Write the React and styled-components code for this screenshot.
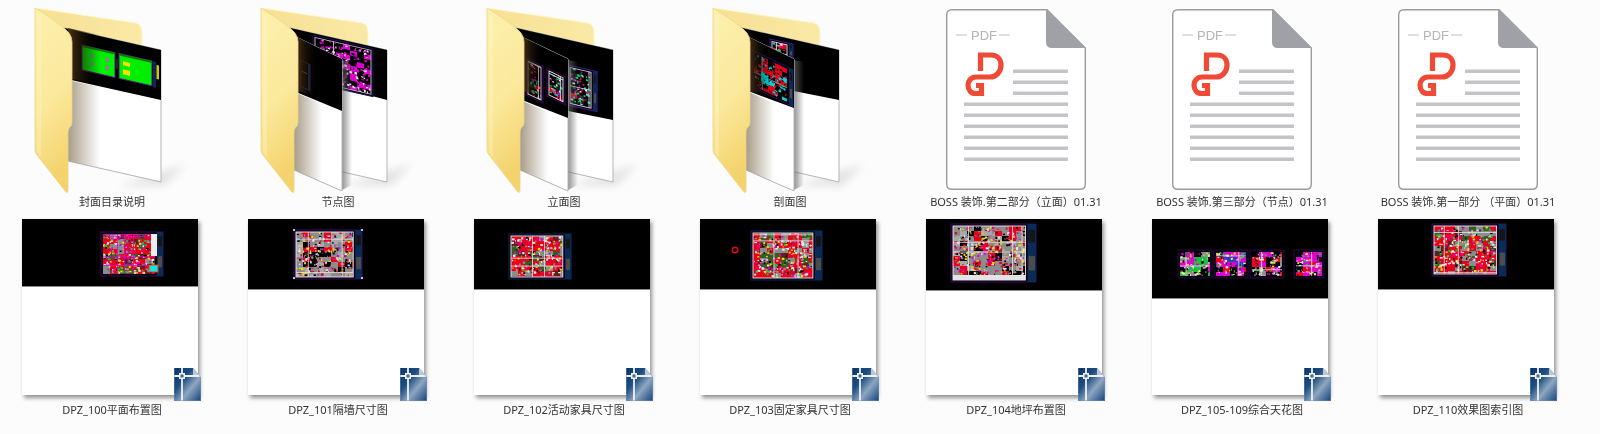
import React from 'react'
import styled, { createGlobalStyle } from 'styled-components'

const GlobalStyle = createGlobalStyle`
  html, body {
    margin: 0;
    background: #fcfcfc;
  }
`

const Page = styled.div`
  width: 1600px;
  height: 434px;
  overflow: hidden;
  box-sizing: border-box;
  padding-left: 2px;
  display: grid;
  grid-template-columns: repeat(7, 216px);
  grid-auto-rows: min-content;
  column-gap: 10px;
  row-gap: 10px;
  font-family: 'Noto Sans', 'Noto Sans CJK SC', sans-serif;
  filter: blur(0.35px);
`

const Cell = styled.div`
  display: flex;
  flex-direction: column;
  align-items: center;
`

const IconSlot = styled.div`
  width: 216px;
  height: 195px;
  line-height: 0;
`

const Label = styled.div`
  font-size: 11px;
  line-height: 14px;
  height: 14px;
  margin-left: 4px;
  color: #333;
  white-space: pre;
  text-align: center;
`

const Thumb = styled.div`
  position: relative;
  width: 176px;
  height: 176px;
  margin-bottom: 8px;
  background: #fff;
  display: flex;
  flex-direction: column;
  box-shadow: 2px 3px 4px rgba(0, 0, 0, 0.42);
`

const ThumbBlack = styled.div`
  height: ${(props) => props.$height}px;
  background: #000;
  border-bottom: 1px solid #8c8c8c;
  line-height: 0;
`

const CadBadge = styled.svg`
  position: absolute;
  right: -3px;
  bottom: -6px;
`

// small seeded random, so the plan drawings stay the same on every render
const seeded = (seed) => {
  let s = seed
  return () => {
    s = (s * 16807) % 2147483647
    return (s - 1) / 2147483646
  }
}

const RED = '#e8001c'
const GRAY = '#8c8c8c'
const MAG = '#e000d0'
const PLAN = [RED, RED, RED, RED, RED, GRAY, GRAY, '#5c2020', '#3c5a20']
const ACCENTS = ['#e8e8e8', '#e8e8e8', MAG, '#f0e000', '#18c040', GRAY, '#000']

const CadPlan = ({ x, y, w, h, seed, colors = PLAN, accents = ACCENTS, lines = 5, lineColor = '#e4e4e4', frame = '#3d0a5a', outline = '#e6e6e6', title = true }) => {
  const rand = seeded(seed)
  const pick = (list) => list[Math.floor(rand() * list.length)]
  const titleW = title ? Math.max(4, w * 0.1) : 0
  const px = x + 2
  const py = y + 2
  const pw = w - 4 - titleW
  const ph = h - 4
  const parts = []
  const cw = 7
  const ch = 5
  for (let i = 0; i * cw < pw; i++) {
    for (let j = 0; j * ch < ph; j++) {
      parts.push(
        <rect key={`b${i}-${j}`} x={px + i * cw} y={py + j * ch} width={Math.min(cw, pw - i * cw)} height={Math.min(ch, ph - j * ch)} fill={pick(colors)} />
      )
    }
  }
  const dots = Math.floor((pw * ph) / 9)
  for (let i = 0; i < dots; i++) {
    const dw = 0.8 + rand() * 2
    const dh = 0.8 + rand() * 1.6
    parts.push(
      <rect key={`d${i}`} x={px + rand() * (pw - dw)} y={py + rand() * (ph - dh)} width={dw} height={dh} fill={pick(accents)} />
    )
  }
  for (let i = 0; i < lines; i++) {
    const a = rand()
    parts.push(
      i % 2 === 0 ? (
        <rect key={`l${i}`} x={px + a * pw} y={py} width="0.8" height={ph} fill={lineColor} />
      ) : (
        <rect key={`l${i}`} x={px} y={py + a * ph} width={pw} height="0.8" fill={lineColor} />
      )
    )
  }
  return (
    <g>
      <rect x={x} y={y} width={w} height={h} fill="#05000f" stroke={frame} strokeWidth="1" />
      {parts}
      {outline && <rect x={px} y={py} width={pw} height={ph} fill="none" stroke={outline} strokeWidth="0.9" />}
      {title && (
        <g>
          <rect x={x + w - titleW} y={y} width={titleW} height={h} fill="#0a2a58" />
          <rect x={x + w - titleW + 1} y={y + h * 0.1} width={titleW - 2} height={h * 0.22} fill="#161616" />
          <rect x={x + w - titleW + 1} y={y + h * 0.55} width={titleW - 2} height={h * 0.25} fill="#4c4c4c" />
        </g>
      )}
    </g>
  )
}

const skew = (x, y, slope = 0.228) => `matrix(1 ${slope} 0 1 ${x} ${y})`
const FRONT_SLOPE = 0.48

const CoverDrawing = () => (
  <g transform={skew(82, 45)}>
    <rect x="0" y="0" width="33" height="25" fill="#00ee00" stroke="#5a1080" strokeWidth="1" />
    <rect x="37" y="0" width="33" height="25" fill="#00ee00" stroke="#5a1080" strokeWidth="1" />
    <rect x="0" y="0" width="33" height="2" fill="#0c7a0c" />
    <rect x="37" y="0" width="33" height="2" fill="#0c7a0c" />
    <g fill="#d050d0">
      <rect x="9" y="7" width="2" height="4" />
      <rect x="9" y="15" width="2" height="4" />
      <rect x="24" y="7" width="2.500" height="4" />
      <rect x="24" y="15" width="2.500" height="4" />
    </g>
    <g fill="#f6e000">
      <rect x="41" y="7" width="7" height="4" />
      <rect x="41" y="15" width="7" height="5" />
    </g>
    <rect x="33.500" y="6" width="3" height="10" fill="#222" />
    <rect x="71" y="0" width="3" height="26" fill="#0a2a58" />
    <rect x="74.500" y="3" width="2.500" height="14" fill="#d8c800" />
  </g>
)

const MAGENTA = ['#000', '#000', '#000', MAG, MAG, '#000']
const MAG_DOTS = [MAG, MAG, '#000', '#f4f4f4']
const COLORFUL = ['#000', '#000', '#000', RED, '#202020']
const COLOR_DOTS = ['#e8e8e8', MAG, '#18d090', '#18d090', RED, '#000']
const CYANRED = ['#000', '#000', RED, RED, '#00d8d8']
const CYAN_DOTS = [RED, RED, '#00e0e0', '#00e0e0', '#000', '#000']

const FOLDERS = [
  {
    label: '封面目录说明',
    back: { black: [90, 100] },
    drawBack: <CoverDrawing />,
  },
  {
    label: '节点图',
    back: { black: [88, 100] },
    front: { black: [92, 111] },
    drawBack: (
      <g transform={skew(87, 35)}>
        <CadPlan x={0} y={0} w={60} h={48} seed={31} colors={MAGENTA} accents={MAG_DOTS} lines={1} title={false} outline="#c8c8c8" frame="#2a0a60" />
      </g>
    ),
    drawFront: (
      <g transform={skew(74, 60, FRONT_SLOPE)}>
        <rect x="0" y="0" width="10" height="26" fill="none" stroke="#4a1a6a" strokeWidth="1" />
        <rect x="8" y="0" width="2" height="26" fill="#16305a" />
        <rect x="1" y="10" width="6" height="0.800" fill="#777" />
      </g>
    ),
  },
  {
    label: '立面图',
    back: { black: [111, 120] },
    front: { black: [100, 118] },
    drawBack: (
      <g transform={skew(116, 65)}>
        <CadPlan x={0} y={0} w={29} h={40} seed={53} colors={COLORFUL} accents={COLOR_DOTS} lines={2} frame="#4a1a9a" />
      </g>
    ),
    drawFront: (
      <g transform={skew(74, 58, FRONT_SLOPE)}>
        <CadPlan x={0} y={0} w={17} h={37} seed={11} colors={COLORFUL} accents={COLOR_DOTS} lines={2} title={false} />
        <CadPlan x={21} y={0} w={18} h={28} seed={19} colors={COLORFUL} accents={COLOR_DOTS} lines={2} title={false} />
      </g>
    ),
  },
  {
    label: '剖面图',
    back: { black: [91, 100] },
    front: { black: [91, 108] },
    drawBack: (
      <g transform={skew(92, 39)}>
        <CadPlan x={0} y={0} w={23} h={14} seed={71} colors={COLORFUL} accents={COLOR_DOTS} lines={1} frame="#4a1a9a" />
      </g>
    ),
    drawFront: (
      <g transform={skew(74, 50, FRONT_SLOPE)}>
        <CadPlan x={0} y={0} w={41} h={37} seed={23} colors={CYANRED} accents={CYAN_DOTS} lines={2} lineColor="#00e0e0" outline={null} frame="#2a0a60" />
      </g>
    ),
  },
]

const Folder = ({ id, back, front, drawBack, drawFront }) => {
  // black[0] is the height of the black band at x 116, black[1] at the right edge
  const backLeft = back.black[0] - ((back.black[1] - back.black[0]) / 45) * 56
  return (
    <svg width="216" height="195" viewBox="2 0 216 195">
      <defs>
        <linearGradient id={`flap${id}`} x1="0" y1="0" x2="0.2" y2="1">
          <stop offset="0" stopColor="#fdf0ae" />
          <stop offset="0.55" stopColor="#fbe99c" />
          <stop offset="1" stopColor="#f4d26c" />
        </linearGradient>
        <linearGradient id={`backf${id}`} x1="0" y1="0" x2="1" y2="0">
          <stop offset="0" stopColor="#f6e092" />
          <stop offset="1" stopColor="#fae9a6" />
        </linearGradient>
        <linearGradient id={`shade${id}`} x1="0" y1="0" x2="1" y2="0">
          <stop offset="0" stopColor="#a89c88" />
          <stop offset="1" stopColor="#a89c88" stopOpacity="0" />
        </linearGradient>
        <linearGradient id={`drop${id}`} x1="0" y1="0" x2="1" y2="0">
          <stop offset="0" stopColor="#666" />
          <stop offset="1" stopColor="#666" stopOpacity="0" />
        </linearGradient>
        <linearGradient id={`glow${id}`} x1="0" y1="0" x2="1" y2="0">
          <stop offset="0" stopColor="#4a3314" />
          <stop offset="1" stopColor="#000" stopOpacity="0" />
        </linearGradient>
        <filter id={`blur${id}`} x="-40%" y="-40%" width="180%" height="180%">
          <feGaussianBlur stdDeviation="4" />
        </filter>
      </defs>

      <path d="M35 8 L136 23 Q142 25 142 32 V50 L55 30 Z" fill={`url(#backf${id})`} stroke="#fff6c8" strokeWidth="1" />
      <polygon points="161,172 186,164 164,186 118,186" fill="#000" opacity="0.1" filter={`url(#blur${id})`} />

      <polygon points="60,27 161,50 161,182 68,161" fill="#fff" stroke="#b4b4b4" strokeWidth="1" />
      <polygon points={`60,27 161,50 161,${back.black[1]} 60,${backLeft}`} fill="#000" />
      {drawBack}
      {!front && <polygon points="68,78 100,85 100,35 68,28" fill={`url(#glow${id})`} />}
      {!front && <polygon points="68,80 100,87 100,168 68,161" fill={`url(#shade${id})`} />}

      {front && (
        <g>
          <polygon points="116,60 126,62 126,185 116,190" fill={`url(#drop${id})`} opacity="0.7" />
          <polygon points="70,37 116,59 116,191 68,170" fill="#fff" stroke="#b4b4b4" strokeWidth="1" />
          <polygon points={`70,37 116,59 116,${front.black[1]} 70,${front.black[0]}`} fill="#000" />
          {drawFront}
          <polygon points="70,37 92,47 92,96 70,91" fill={`url(#glow${id})`} />
          <polygon points={`68,${front.black[0]} 96,${front.black[0] + 12} 96,182 68,170`} fill={`url(#shade${id})`} />
        </g>
      )}

      <path
        d="M35 8 C50 17 64 27 69 33 Q72 37 72 42 V122 Q72 126 69.500 127.500 Q68 129 68 133 V190 Q68 194 65.500 191.500 L37 155 Q35 153 35 150 Z"
        fill={`url(#flap${id})`}
        stroke="#ecd488"
        strokeWidth="0.8"
      />
      <path d="M38 15 V153 M40 17 V156" stroke="#fff7cc" strokeWidth="0.8" fill="none" opacity="0.8" />
    </svg>
  )
}

const PdfFile = () => (
  <svg width="216" height="195" viewBox="-40 -9 216 195">
    <path
      d="M6 0.700 H101 L139.300 39 V175 Q139.300 180.300 134 180.300 H6 Q0.700 180.300 0.700 175 V6 Q0.700 0.700 6 0.700 Z"
      fill="#fff"
      stroke="#9b9ba0"
      strokeWidth="1.4"
    />
    <path d="M100 0 L139.800 39 H106 Q100 39 100 33 Z" fill="#a0a1a6" />
    <path d="M10 26 H21 M53 26 H64" stroke="#bdbdbd" strokeWidth="1" />
    <text x="25" y="30.700" fontFamily="'Liberation Sans', sans-serif" fontSize="13" fill="#b5b5b5">
      PDF
    </text>
    <path
      d="M32 46 H45 C52 46 55 51 55 56 C55 63 50 68 44 68 H30 C25 68 22 72 22 76 C22 81 25 84.500 30 84.500 H35.500 V76.500 H30"
      fill="none"
      stroke="#f04a36"
      strokeWidth="5.200"
    />
    <path d="M34.500 46 V62" fill="none" stroke="#f04a36" strokeWidth="5.200" />
    <g fill="#c4c4c8">
      {[60.500, 71.500, 82.500].map((y) => (
        <rect key={y} x="67" y={y} width="55" height="3.500" />
      ))}
      {[93.500, 104.500, 115.500, 126.500, 137.500, 148.500].map((y) => (
        <rect key={y} x="18" y={y} width="104" height="3.500" />
      ))}
    </g>
  </svg>
)

const PDFS = ['BOSS 装饰.第二部分（立面）01.31', 'BOSS 装饰.第三部分（节点）01.31', 'BOSS 装饰.第一部分 （平面）01.31']

const Badge = ({ id }) => (
  <CadBadge width="27" height="33" viewBox="0 0 27 33">
    <defs>
      <linearGradient id={`badge${id}`} x1="0" y1="0" x2="1" y2="1">
        <stop offset="0" stopColor="#0c3568" />
        <stop offset="0.35" stopColor="#1e4d80" />
        <stop offset="0.62" stopColor="#8ea6c0" />
        <stop offset="1" stopColor="#12427a" />
      </linearGradient>
    </defs>
    <path d="M0 0 H19 L27 9 V33 H0 Z" fill={`url(#badge${id})`} />
    <path d="M19 0 L27 9 H19 Z" fill="#b9c8d8" />
    <path d="M0 8 H25 M8 0 V33" stroke="#eef2f6" strokeWidth="1.800" />
    <rect x="5" y="5" width="6" height="6" fill="#eef2f6" />
    <rect x="6.500" y="6.500" width="3" height="3" fill="#43688f" />
    <path d="M0.300 0 V32.700 H26.700 V9" fill="none" stroke="#6f93b8" strokeWidth="0.6" />
  </CadBadge>
)

const CornerDots = () => (
  <g fill="#f0f0f0">
    <circle cx="46" cy="11" r="1.100" />
    <circle cx="114" cy="11" r="1.100" />
    <circle cx="46" cy="59" r="1.100" />
    <circle cx="114" cy="59" r="1.100" />
  </g>
)

const GRAYPLAN = [GRAY, GRAY, GRAY, GRAY, '#a8a8a8', RED, '#000']
const GRAY_DOTS = ['#e8e8e8', GRAY, '#000', RED, MAG, '#f0e000']

const THUMBS = [
  {
    label: 'DPZ_100平面布置图',
    black: 67,
    plan: { x: 79, y: 13, w: 62, h: 44, seed: 101, lines: 8, lineColor: MAG, outline: null },
    accent: (
      <g>
        <rect x="129" y="15" width="6" height="22" fill="#eee" />
        <rect x="127" y="46" width="9" height="7" fill="#00e8e8" stroke="#e84010" />
      </g>
    ),
  },
  {
    label: 'DPZ_101隔墙尺寸图',
    black: 70,
    plan: { x: 46, y: 11, w: 68, h: 49, seed: 202, colors: GRAYPLAN, accents: GRAY_DOTS, lines: 4 },
    accent: <CornerDots />,
  },
  { label: 'DPZ_102活动家具尺寸图', black: 70, plan: { x: 35, y: 15, w: 62, h: 45, seed: 303, frame: '#0a2a58', lines: 4 } },
  {
    label: 'DPZ_103固定家具尺寸图',
    black: 70,
    plan: { x: 51, y: 12, w: 71, h: 49, seed: 404, frame: '#0a2a58', lines: 4 },
    accent: <circle cx="35" cy="31" r="2.800" fill="none" stroke={RED} strokeWidth="1.400" />,
  },
  {
    label: 'DPZ_104地坪布置图',
    black: 71,
    plan: { x: 25, y: 5, w: 85, h: 58, seed: 505, colors: GRAYPLAN, accents: GRAY_DOTS, lines: 5 },
    accent: <rect x="27" y="56" width="72" height="5" fill="#e4e4e4" />,
  },
  { label: 'DPZ_105-109综合天花图', black: 79, wide: true },
  { label: 'DPZ_110效果图索引图', black: 70, plan: { x: 54, y: 5, w: 74, h: 52, seed: 707, lines: 4 } },
]

const CEILING = [
  { x: 26, colors: ['#000', MAG, '#18c040', '#18c040', GRAY] },
  { x: 62, colors: ['#000', MAG, MAG, RED, '#2040c0'] },
  { x: 98, colors: ['#000', RED, MAG, RED, GRAY] },
  { x: 142, colors: ['#000', MAG, MAG, RED] },
]

const ThumbArt = ({ thumb }) => (
  <svg width="176" height={thumb.black} viewBox={`0 0 176 ${thumb.black}`}>
    {thumb.plan && <CadPlan {...thumb.plan} />}
    {thumb.wide &&
      CEILING.map((c, i) => (
        <CadPlan key={c.x} x={c.x} y={31} w={i === 3 ? 30 : 34} h={28} seed={600 + i * 37} colors={c.colors} lines={2} title={false} outline={null} frame="#2a0a40" />
      ))}
    {thumb.accent}
  </svg>
)

const App = () => (
  <>
    <GlobalStyle />
    <Page>
      {FOLDERS.map((folder, index) => (
        <Cell key={folder.label}>
          <IconSlot>
            <Folder id={index} back={folder.back} front={folder.front} drawBack={folder.drawBack} drawFront={folder.drawFront} />
          </IconSlot>
          <Label>{folder.label}</Label>
        </Cell>
      ))}
      {PDFS.map((name) => (
        <Cell key={name}>
          <IconSlot>
            <PdfFile />
          </IconSlot>
          <Label>{name}</Label>
        </Cell>
      ))}
      {THUMBS.map((thumb, index) => (
        <Cell key={thumb.label}>
          <Thumb>
            <ThumbBlack $height={thumb.black}>
              <ThumbArt thumb={thumb} />
            </ThumbBlack>
            <Badge id={index} />
          </Thumb>
          <Label>{thumb.label}</Label>
        </Cell>
      ))}
    </Page>
  </>
)

export default App
